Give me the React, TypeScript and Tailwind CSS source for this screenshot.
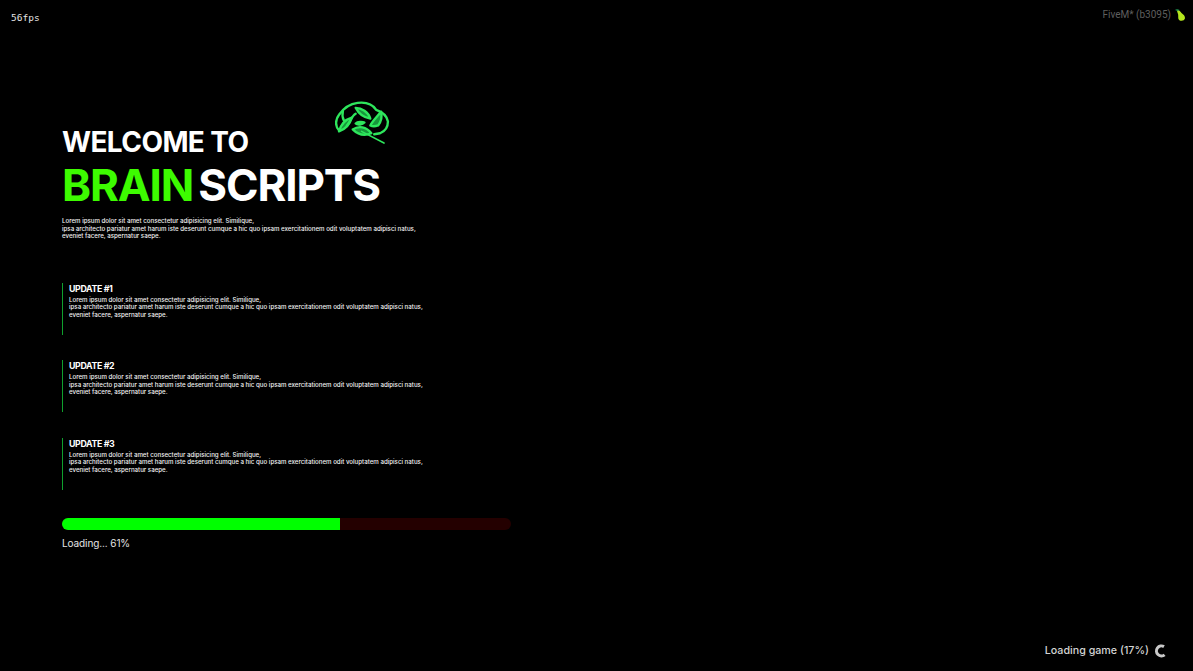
const lorem = (
  <>
    Lorem ipsum dolor sit amet consectetur adipisicing elit. Similique,
    <br />
    ipsa architecto pariatur amet harum iste deserunt cumque a hic quo ipsam exercitationem odit voluptatem adipisci natus,
    <br />
    eveniet facere, aspernatur saepe.
  </>
);

const updates = ["UPDATE #1", "UPDATE #2", "UPDATE #3"];

function BrainLogo() {
  return (
    <svg width="55" height="45" viewBox="0 0 56 46" fill="none" aria-hidden="true">
      <g stroke="#2ee65c" strokeWidth="2.4" strokeLinecap="round" strokeLinejoin="round">
        <path d="M4 30C0 26 0 19 4 14C9 7 15 3 23 2C31 1 38 3 42 9C48 11 53 15 54 21C54 27 51 31 46 33L40 34" />
        <path d="M4 31C6 24 10 19 17 17C15 24 10 29 4 31Z" fill="#17963c" />
        <path d="M8 10C7 14 8 18 9 20" />
        <path d="M21 7C27 7 34 11 36 18C29 17 24 13 21 7Z" fill="#17963c" />
        <path d="M47 11C48 15 47 21 44 25C41 26 38 26 36 25C38 21 42 17 47 11Z" fill="#17963c" />
        <path d="M12 25C16 21 17 15 21 13" />
        <path d="M18 29C24 25 32 26 37 33C30 36 23 34 18 29Z" fill="#17963c" />
        <path d="M21 23C23 21 28 21 30 22C28 24 23 25 21 23Z" fill="#2ee65c" />
      </g>
      <path d="M27 31L50 43" stroke="#2ee65c" strokeWidth="1.6" strokeLinecap="round" />
    </svg>
  );
}

function Pear() {
  return (
    <svg width="12" height="14" viewBox="0 0 12 14" aria-hidden="true">
      <path d="M3 2C5.5 2 6.5 3.5 7.5 5C9.5 6.5 11.2 8 11 10.3C10.5 12.8 7.2 13.4 5.4 12.2C3.6 10.8 4.6 8 4 6C3.6 4.5 3 3.3 3 2Z" fill="#b4e61e" />
      <path d="M1 2C2 1 4 1 5.5 2L3.5 3Z" fill="#1f9a55" />
    </svg>
  );
}

function Spinner() {
  return (
    <svg width="12" height="14" viewBox="0 0 12 14" fill="none" aria-hidden="true">
      <path d="M10 2.6A5 5 0 1 0 10.6 10.8" stroke="#c8c8c8" strokeWidth="3" />
    </svg>
  );
}

export default function App() {
  return (
    <div className="flex h-[671px] flex-col bg-black font-['Inter',sans-serif] text-white">
      <div className="flex justify-between pl-[11px] pr-[7px] pt-[6px]">
        <span className="mt-[6px] font-['DejaVu_Sans_Mono',monospace] text-[9.5px] leading-[12px] text-[#e4e4e4]">56fps</span>
        <div className="flex items-center gap-[3px] font-['Roboto',sans-serif] text-[10px] leading-[14px] text-[#5e5e5e]">
          FiveM* (b3095)
          <Pear />
        </div>
      </div>

      <div className="relative ml-[62px] mt-[100px] w-[449px]">
        <div className="absolute left-[273px] top-[-23px]">
          <BrainLogo />
        </div>
        <h1 className="text-[28px] font-bold leading-[36px] tracking-[-0.6px]">WELCOME TO</h1>
        <h2 className="flex gap-[5px] text-[44px] font-bold leading-[51px] tracking-[-1.1px]">
          <span className="text-[#3dfb00]">BRAIN</span>
          <span>SCRIPTS</span>
        </h2>
        <p className="mt-[6px] text-[6.15px] font-medium leading-[7.5px] text-[#f2f2f2]">{lorem}</p>

        <div className="mt-[43.4px] flex flex-col gap-[25.5px]">
          {updates.map((title) => (
            <div key={title} className="h-[52px] border-l border-[#0fa02d] pl-[6px] pt-[1px]">
              <h3 className="text-[8.8px] font-bold leading-[10px] tracking-[-0.35px]">{title}</h3>
              <p className="mt-[2px] text-[6.15px] font-medium leading-[7.5px] text-[#f2f2f2]">{lorem}</p>
            </div>
          ))}
        </div>

        <div className="mt-[28.6px] h-[12px] overflow-hidden rounded-full bg-[#240000]">
          <div className="h-full w-[62%] bg-[#00ff00]" />
        </div>
        <p className="mt-[6px] text-[10px] leading-[14px] tracking-[-0.1px] text-[#e4e4e4]">Loading... 61%</p>
      </div>

      <div className="mt-auto flex items-center justify-end gap-[5px] pb-[13px] pr-[27px] text-[10.7px] font-medium leading-[14px] text-[#d4d4d4]">
        Loading game (17%)
        <Spinner />
      </div>
    </div>
  );
}
